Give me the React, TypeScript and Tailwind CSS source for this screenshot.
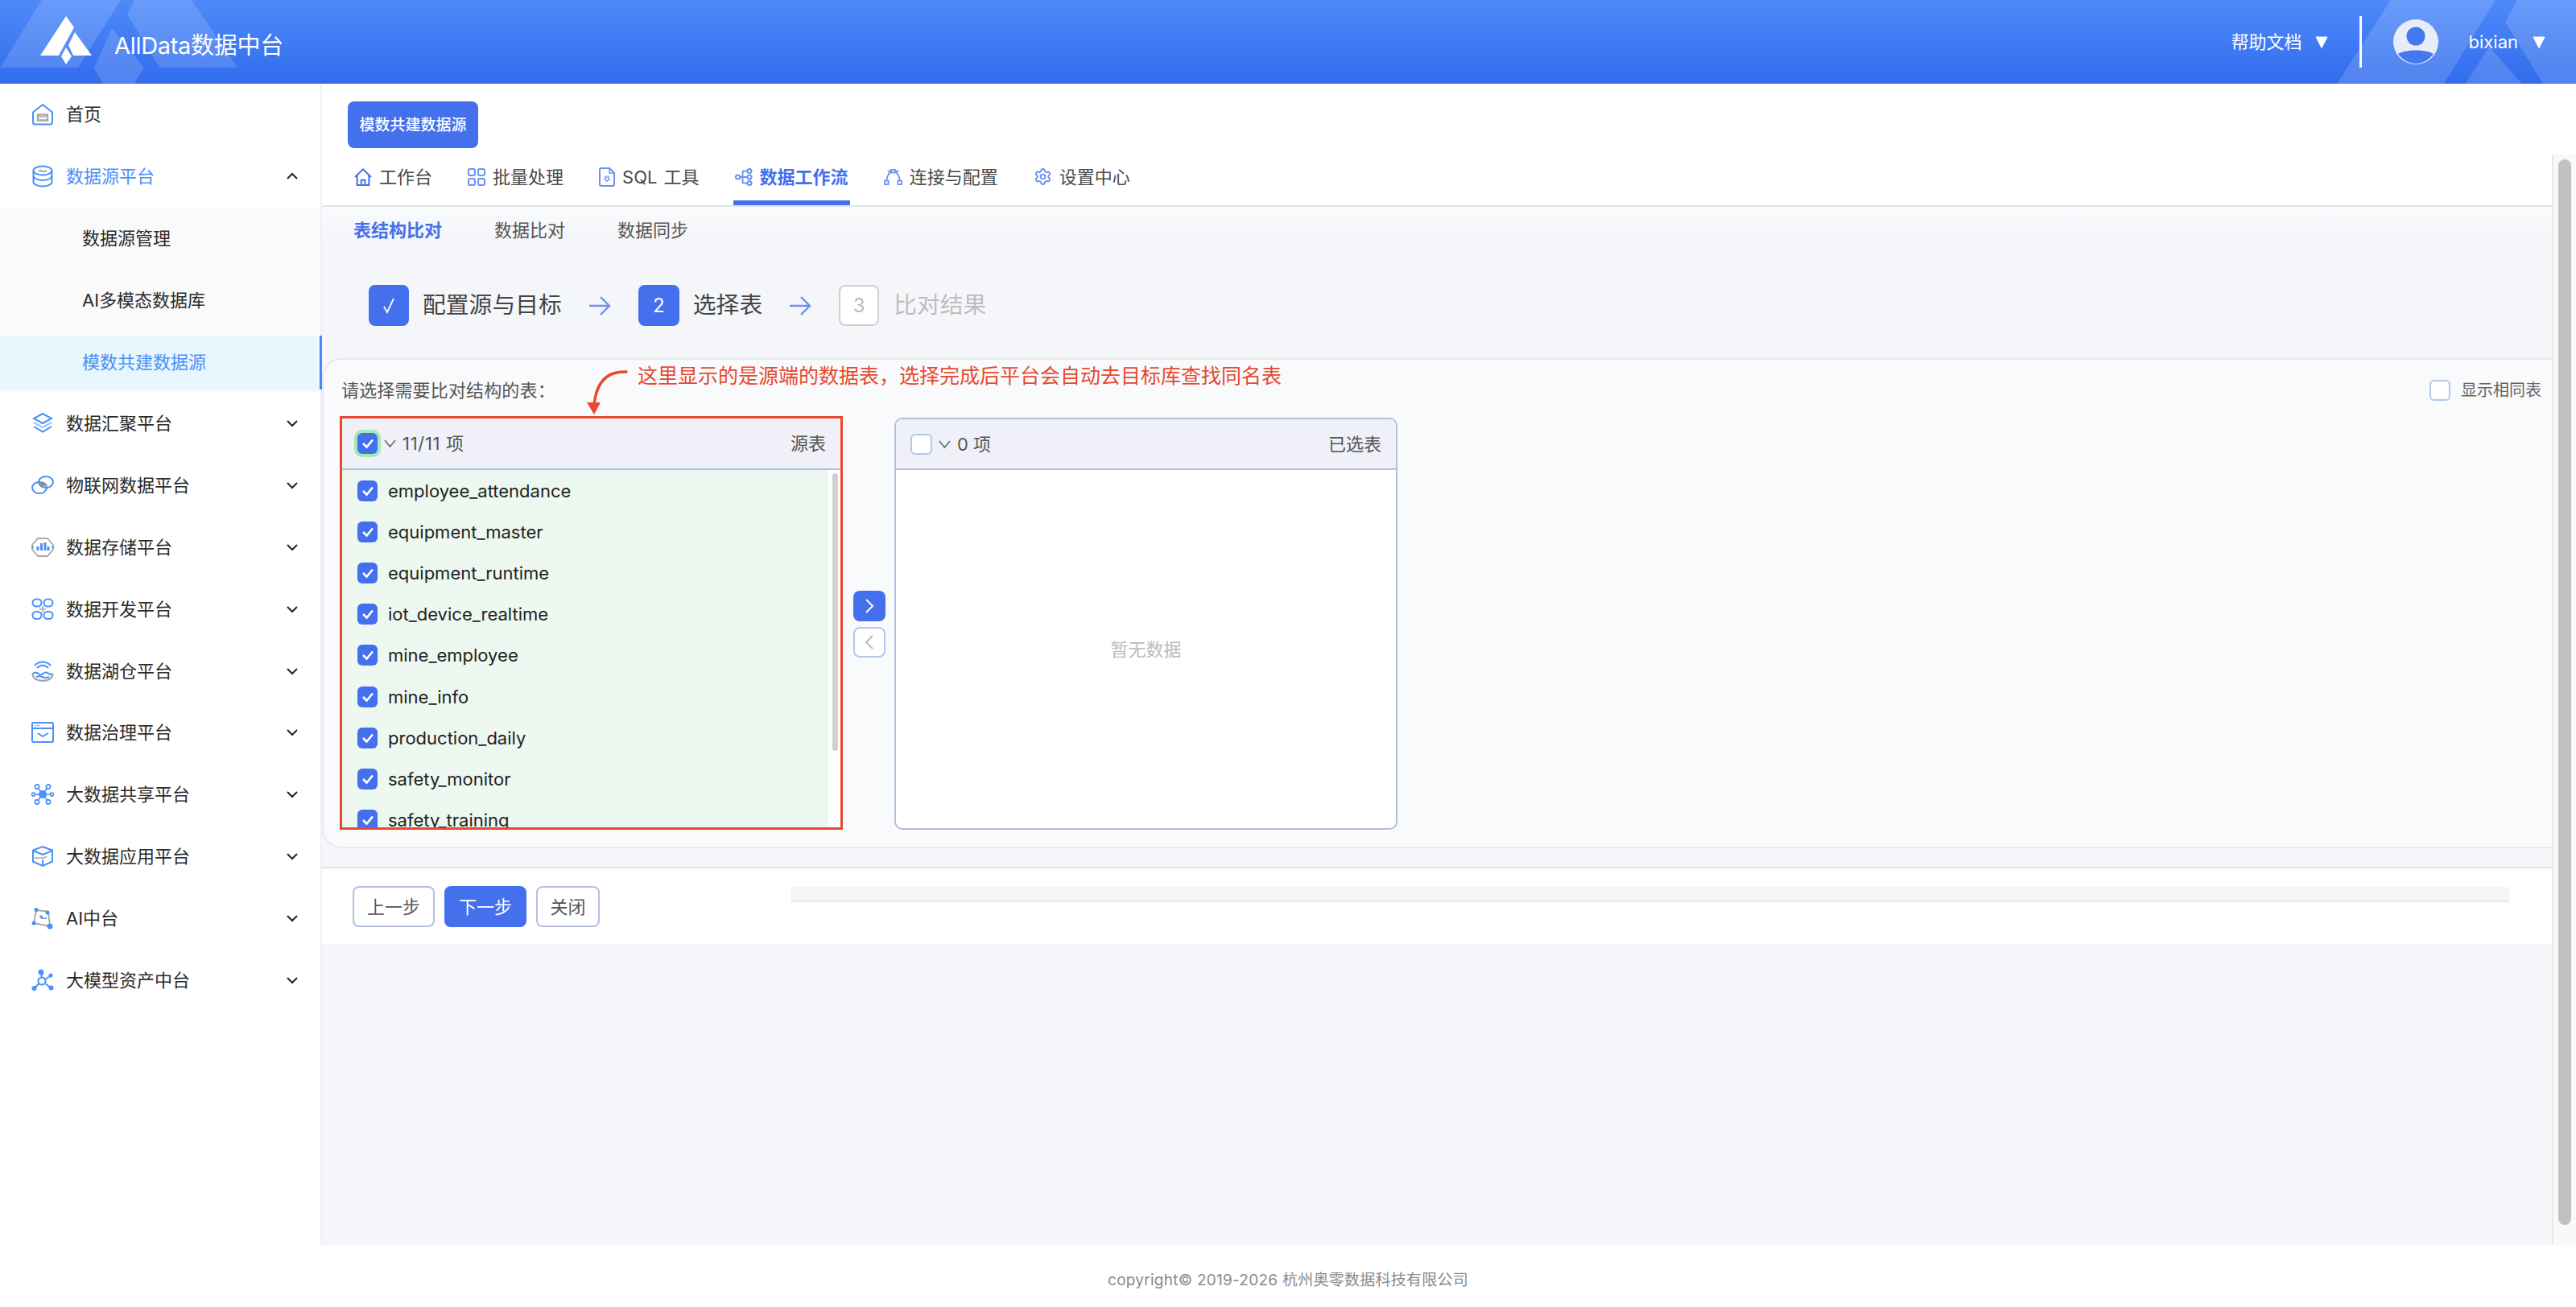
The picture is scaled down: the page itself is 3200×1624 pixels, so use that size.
import React from 'react'
import { Settings } from 'lucide-react'

const BLUE = '#4a90f7'
const GRAY = '#a9a9a9'

function NavIcon({ children }: { children: React.ReactNode }) {
  return (
    <svg width="28" height="28" viewBox="0 0 28 28" fill="none" stroke={BLUE} strokeWidth="2" className="shrink-0">
      {children}
    </svg>
  )
}

const navIcons: Record<string, React.ReactNode> = {
  home: (
    <>
      <path d="M2 11.5 14 2l12 9.5V24a2.5 2.5 0 0 1-2.5 2.5h-19A2.5 2.5 0 0 1 2 24z" />
      <path d="M8 14.5h12v7H8z" stroke={GRAY} strokeWidth="2.4" />
      <path d="M8 14.5l3 2.5h6l3-2.5" stroke={GRAY} strokeWidth="1.6" />
    </>
  ),
  db: (
    <>
      <ellipse cx="14" cy="7" rx="11.5" ry="5.5" />
      <path d="M2.5 7v6.5c0 3 5 5.5 11.5 5.5s11.5-2.500 11.500-5.500V7" />
      <path d="M2.500 14v7c0 3 5 5.500 11.500 5.500s11.500-2.500 11.500-5.500v-7" />
      <path d="M9 8c2-2.500 4-.5 5 0s3 .5 5-1.500" stroke={GRAY} />
    </>
  ),
  layers: (
    <>
      <path d="M14 2 25 8l-11 6L3 8z" />
      <path d="M3 13l11 6 11-6" stroke="#9fc4f8" strokeWidth="2.200" />
      <path d="M3 18l11 6.500L25 18" />
    </>
  ),
  iot: (
    <>
      <ellipse cx="10" cy="17" rx="9" ry="7" />
      <ellipse cx="18" cy="10" rx="9" ry="7" />
      <path d="M10.500 10.500c5-1.500 8 1 9 3-4 3.500-8 2.500-9.500 1-1-1.500-.5-3 .5-4z" fill="#8f8f8f" stroke="none" />
    </>
  ),
  store: (
    <>
      <path d="M8 3h12l7 8v6l-7 8H8l-7-8v-6z" stroke={GRAY} strokeWidth="1.800" />
      <path d="M8 18v-5M12.500 18V9M17 18V8M21 18v-5" strokeWidth="3" />
      <circle cx="1.500" cy="14" r="1.400" fill={BLUE} stroke="none" />
      <circle cx="26.500" cy="14" r="1.400" fill={BLUE} stroke="none" />
    </>
  ),
  dev: (
    <>
      <rect x="1.500" y="1.500" width="11" height="9" rx="4.500" />
      <rect x="15.500" y="1.500" width="11" height="9" rx="4.500" />
      <rect x="1.500" y="17" width="11" height="9" rx="4.500" />
      <rect x="15.500" y="17" width="11" height="9" rx="4.500" />
      <path d="M14 10v8M10 14h8" stroke={GRAY} strokeWidth="1.600" />
    </>
  ),
  lake: (
    <>
      <path d="M7 10c4-4.500 10-4.500 14 0" />
      <path d="M4 7c5.500-6 14.500-6 20 0" />
      <path d="M1.500 17c3-2 5-2 7 0s5 2 6 0 5-2 7 0 3 1 5 0" />
      <path d="M1.500 17c0 6 6 9 12.500 9s12.500-3 12.500-9" stroke={GRAY} strokeWidth="2.400" />
      <path d="M6 21c3-1 5-1 7 0s6 1 9 0" />
    </>
  ),
  gov: (
    <>
      <rect x="1" y="2" width="26" height="24" rx="1.500" />
      <path d="M1 9h26" />
      <path d="M4 5.500h7" stroke={GRAY} strokeDasharray="2 1" />
      <path d="M8 15l6 4 7-4" />
    </>
  ),
  share: (
    <>
      <circle cx="14" cy="14" r="5" fill={BLUE} stroke="none" />
      <circle cx="7" cy="4.500" r="2.600" strokeWidth="1.700" />
      <circle cx="21" cy="4.500" r="2.600" strokeWidth="1.700" />
      <circle cx="7" cy="23.500" r="2.600" strokeWidth="1.700" />
      <circle cx="21" cy="23.500" r="2.600" strokeWidth="1.700" />
      <circle cx="2.500" cy="14" r="2" strokeWidth="1.700" />
      <circle cx="25.500" cy="14" r="2" strokeWidth="1.700" />
      <path d="M8.500 7l3 3.500M19.500 7l-3 3.500M8.500 21l3-3.500M19.500 21l-3-3.500M4.500 14h5M18.500 14h5" strokeWidth="1.700" />
    </>
  ),
  cube: (
    <>
      <path d="M14 2 26 6.500v14L14 26 2 20.500v-14z" />
      <path d="M2 7l12 5 12-5" />
      <path d="M4 16h12l3-2" stroke={GRAY} strokeWidth="1.600" />
      <path d="M14 18v8" />
    </>
  ),
  ai: (
    <>
      <path d="M6 4l15 1.500L23 24 3 20z" stroke={GRAY} strokeWidth="1.800" />
      <circle cx="6" cy="3.500" r="2.500" fill={BLUE} stroke="none" />
      <circle cx="20" cy="7" r="2.500" fill={BLUE} stroke="none" />
      <circle cx="3" cy="20" r="2.500" fill={BLUE} stroke="none" />
      <circle cx="23" cy="24" r="3.500" fill={BLUE} stroke="none" />
      <circle cx="12" cy="12" r="1.800" fill={BLUE} stroke="none" />
      <path d="M12 14h7" strokeWidth="1.600" />
    </>
  ),
  model: (
    <>
      <circle cx="12" cy="4" r="3.500" fill={BLUE} stroke="none" />
      <circle cx="3.500" cy="24" r="3" fill={BLUE} stroke="none" />
      <circle cx="24.500" cy="23.500" r="3" fill={BLUE} stroke="none" />
      <circle cx="24" cy="8" r="2.500" fill={BLUE} stroke="none" />
      <circle cx="13" cy="15" r="4.500" />
      <path d="M12.500 6.500v4M17 13l6-4M9.500 18l-5 5M17 18l6 4.500" />
    </>
  ),
}

const navTail = [
  ['layers', '数据汇聚平台'],
  ['iot', '物联网数据平台'],
  ['store', '数据存储平台'],
  ['dev', '数据开发平台'],
  ['lake', '数据湖仓平台'],
  ['gov', '数据治理平台'],
  ['share', '大数据共享平台'],
  ['cube', '大数据应用平台'],
  ['ai', 'AI中台'],
  ['model', '大模型资产中台'],
]

const rows = [
  'employee_attendance',
  'equipment_master',
  'equipment_runtime',
  'iot_device_realtime',
  'mine_employee',
  'mine_info',
  'production_daily',
  'safety_monitor',
  'safety_training',
]

function Chevron({ up }: { up?: boolean }) {
  return (
    <svg width="16" height="10" viewBox="0 0 16 10" fill="none" stroke="#222" strokeWidth="2" className="ml-auto mr-[27px]">
      <path d={up ? 'M2 8l6-6 6 6' : 'M2 2l6 6 6-6'} />
    </svg>
  )
}

function Check({ ring }: { ring?: boolean }) {
  return (
    <span
      className={
        ring
          ? 'flex h-[26px] w-[25px] shrink-0 items-center justify-center rounded-[6px] bg-[#4470ee] ring-4 ring-[#a3e9b5]'
          : 'flex h-[26px] w-[25px] shrink-0 items-center justify-center rounded-[6px] bg-[#4470ee]'
      }
    >
      <svg width="16" height="14" viewBox="0 0 16 14" fill="none" stroke="#fff" strokeWidth="2.600">
        <path d="M2 7l4.500 4.500L14 2.500" />
      </svg>
    </span>
  )
}

function Caret() {
  return (
    <svg width="17" height="12" viewBox="0 0 17 12" fill="none" stroke="#666" strokeWidth="1.500" className="ml-[7px] mr-[7px]">
      <path d="M2 2l6.500 8L15 2" />
    </svg>
  )
}

function Triangle() {
  return (
    <svg width="16" height="15" viewBox="0 0 16 15" fill="#fff">
      <path d="M1 1h14L8 14.500z" stroke="#fff" strokeLinejoin="round" />
    </svg>
  )
}

function StepArrow() {
  return (
    <svg width="28" height="26" viewBox="0 0 28 26" fill="none" stroke="#6c91f5" strokeWidth="2.400">
      <path d="M1 13h25M15 2l11 11-11 11" />
    </svg>
  )
}

function Tab({ icon, text, active }: { icon: React.ReactNode; text: string; active?: boolean }) {
  return (
    <div
      className={
        active
          ? 'flex h-full items-center gap-[9px] border-b-[6px] border-[#4470ee] px-[2px] pb-[2px] font-semibold text-[#4470ee]'
          : 'flex h-full items-center gap-[9px] border-b-[6px] border-transparent px-[2px] pb-[2px] text-[#4a4a4a]'
      }
    >
      {icon}
      <span className="[word-spacing:2px]">{text}</span>
    </div>
  )
}

function Btn({ text, primary, w }: { text: string; primary?: boolean; w: string }) {
  return (
    <div
      className={
        primary
          ? `flex h-[51px] ${w} items-center justify-center rounded-[8px] bg-[#4470ee] text-white`
          : `flex h-[51px] ${w} items-center justify-center rounded-[8px] border-2 border-[#b4c0e2] bg-white text-[#555]`
      }
    >
      {text}
    </div>
  )
}

export default function App() {
  return (
    <div className="flex h-[1624px] w-[3200px] flex-col overflow-hidden bg-white text-[22px] leading-none [font-family:Inter,'Noto_Sans_CJK_SC',sans-serif]">
      {/* header */}
      <header className="relative flex h-[104px] shrink-0 items-center bg-gradient-to-b from-[#4e8afa] to-[#326cec] text-white">
        <svg className="absolute inset-0" width="3200" height="104" viewBox="0 0 3200 104" fill="#fff" fillOpacity="0.15">
          <path d="M0 84 52 0h98L97 84z" />
          <path d="M158 18 167 0h71l57 84h-97z" />
          <path d="M117 84 139 35l40 49-12 20h-39z" />
          <path d="M2903 104 2970 0h130l-64 104z" />
          <path d="M3127 0h73v104h-41l-47-77z" />
          <path d="M3063 104 3092 58l41 46z" />
        </svg>
        <svg className="relative ml-[50px]" width="64" height="64" viewBox="0 0 64 64" fill="#fff">
          <path d="M32 0 42 14 23 49H0z" />
          <path d="M43 20 64 49H41l-6-13z" />
          <path d="M32 39l7 11-7 10-6-10z" />
        </svg>
        <span className="relative ml-[28px] mt-[8px] text-[29px] tracking-[-0.3px]">AllData数据中台</span>
        <div className="relative ml-auto flex items-center">
          <span>帮助文档</span>
          <span className="ml-[16px]"><Triangle /></span>
          <span className="ml-[39px] h-[64px] w-[3px] bg-white" />
          <svg className="ml-[39px]" width="56" height="56" viewBox="0 0 56 56">
            <circle cx="28" cy="28" r="28" fill="#e8ecf9" />
            <circle cx="28" cy="21" r="11.500" fill="#4479ee" />
            <path d="M6 43c9-6 35-6 44 0-5 7-13 12-22 12S11 50 6 43z" fill="#4479ee" />
          </svg>
          <span className="ml-[38px]">bixian</span>
          <span className="ml-[18px] mr-[38px]"><Triangle /></span>
        </div>
      </header>

      <div className="flex min-h-0 flex-1">
        {/* sidebar */}
        <aside className="w-[400px] shrink-0 border-r-2 border-[#eef0f5] bg-white text-[#2b2b2b]">
          <div className="flex h-[76.8px] items-center gap-[15px] pl-[39px]">
            <NavIcon>{navIcons.home}</NavIcon>
            <span>首页</span>
          </div>
          <div className="flex h-[76.8px] items-center gap-[15px] pl-[39px] text-[#4a90f7]">
            <NavIcon>{navIcons.db}</NavIcon>
            <span>数据源平台</span>
            <Chevron up />
          </div>
          <div className="flex h-[230.4px] flex-col gap-[10px] bg-[#fafafa] pt-[5px]">
            <div className="flex h-[67px] items-center pl-[102px]">数据源管理</div>
            <div className="flex h-[67px] items-center pl-[102px]">AI多模态数据库</div>
            <div className="mr-[-2px] flex h-[67px] items-center border-r-[3px] border-[#4a86f5] bg-[#e8f6fe] pl-[102px] text-[#4a90f7]">模数共建数据源</div>
          </div>
          {navTail.map(([icon, label]) => (
            <div key={label} className="flex h-[76.8px] items-center gap-[15px] pl-[39px]">
              <NavIcon>{navIcons[icon]}</NavIcon>
              <span>{label}</span>
              <Chevron />
            </div>
          ))}
        </aside>

        <main className="flex min-w-0 flex-1 flex-col">
          <div className="h-[88px] shrink-0 pl-[32px] pt-[22px]">
            <div className="flex h-[58px] w-[162px] items-center justify-center rounded-[8px] bg-[#4470ee] text-[19px] font-medium text-white">模数共建数据源</div>
          </div>

          <div className="flex min-h-0 flex-1">
            <div className="flex min-w-0 flex-1 flex-col bg-[#f5f6fa]">
              {/* tabs */}
              <div className="flex h-[65px] shrink-0 gap-[40px] border-b-2 border-[#dfe3f2] bg-white pl-[38px]">
                <Tab
                  text="工作台"
                  icon={
                    <svg width="22" height="24" viewBox="0 0 24 24" fill="none" stroke="#4470ee" strokeWidth="2.200">
                      <path d="M1 12 12 1.500 23 12M4 10v13h16V10M9.500 23v-7h5v7" />
                    </svg>
                  }
                />
                <Tab
                  text="批量处理"
                  icon={
                    <svg width="22" height="22" viewBox="0 0 22 22" fill="none" stroke="#6c91f5" strokeWidth="2">
                      <rect x="1" y="1" width="8" height="8" rx="2" />
                      <rect x="13" y="1" width="8" height="8" rx="2" />
                      <rect x="1" y="13" width="8" height="8" rx="2" />
                      <rect x="13" y="13" width="8" height="8" rx="2" />
                    </svg>
                  }
                />
                <Tab
                  text="SQL 工具"
                  icon={
                    <svg width="20" height="24" viewBox="0 0 20 24" fill="none" stroke="#6c91f5" strokeWidth="2">
                      <path d="M1 3a2 2 0 0 1 2-2h10l6 6v14a2 2 0 0 1-2 2H3a2 2 0 0 1-2-2z" />
                      <path d="M13 1v6h6" strokeWidth="1.400" />
                      <circle cx="10" cy="14" r="2.500" strokeWidth="2.600" strokeDasharray="2 1" />
                    </svg>
                  }
                />
                <Tab
                  active
                  text="数据工作流"
                  icon={
                    <svg width="22" height="22" viewBox="0 0 22 22" fill="none" stroke="#6c91f5" strokeWidth="2">
                      <circle cx="3.500" cy="11" r="2.500" />
                      <circle cx="18" cy="3.500" r="2.500" />
                      <circle cx="18" cy="11" r="2.500" />
                      <circle cx="18" cy="18.500" r="2.500" />
                      <path d="M6 11h9.500M9.500 11V5c0-1 .5-1.500 1.500-1.500h4.500M9.500 11v6c0 1 .5 1.500 1.500 1.500h4.500" />
                    </svg>
                  }
                />
                <Tab
                  text="连接与配置"
                  icon={
                    <svg width="23" height="20" viewBox="0 0 25 22" fill="none" stroke="#6c91f5" strokeWidth="2">
                      <rect x="10" y="1" width="5" height="4" />
                      <rect x="1" y="16" width="5" height="5" />
                      <rect x="19" y="16" width="5" height="5" />
                      <path d="M10 3H5M15 3h5M3.500 16C4 10 6 6 10 3.500M21.500 16C21 10 19 6 15 3.500" />
                    </svg>
                  }
                />
                <Tab text="设置中心" icon={<Settings size={23} color="#6c91f5" strokeWidth={2} />} />
              </div>

              {/* sub tabs */}
              <div className="flex h-[57px] shrink-0 items-center gap-[65px] bg-gradient-to-b from-[#f9fafc] to-[#f3f4f7] pl-[39px] text-[#555]">
                <span className="font-semibold text-[#4470ee]">表结构比对</span>
                <span>数据比对</span>
                <span>数据同步</span>
              </div>

              {/* steps */}
              <div className="flex h-[131px] shrink-0 items-center pl-[58px] text-[28.8px] text-[#444]">
                <span className="flex h-[51px] w-[50px] items-center justify-center rounded-[8px] bg-[#4470ee]">
                  <svg width="18" height="24" viewBox="0 0 18 24" fill="none" stroke="#fff" strokeWidth="1.800">
                    <path d="M3 13l4 7L15 3" />
                  </svg>
                </span>
                <span className="ml-[17px]">配置源与目标</span>
                <span className="ml-[33px]"><StepArrow /></span>
                <span className="ml-[34px] flex h-[51px] w-[51px] items-center justify-center rounded-[8px] bg-[#4470ee] text-[24px] text-white">2</span>
                <span className="ml-[17px]">选择表</span>
                <span className="ml-[33px]"><StepArrow /></span>
                <span className="ml-[34px] flex h-[51px] w-[50px] items-center justify-center rounded-[8px] border-2 border-[#cfcfcf] bg-white text-[24px] text-[#bbb]">3</span>
                <span className="ml-[18px] text-[#bdbdbd]">比对结果</span>
              </div>

              {/* transfer panel */}
              <section className="relative h-[609px] shrink-0 rounded-l-[24px] border-y-2 border-l-2 border-[#e8e9ef] bg-[#f9fafc] pl-[20px]">
                <div className="flex h-[70px] items-center pl-[2px] pr-[13px] pt-[6px] text-[#555]">
                  <span className="tracking-[0.15px]">请选择需要比对结构的表：</span>
                  <span className="ml-auto h-[26px] w-[26px] rounded-[6px] border-2 border-[#b4c6ea] bg-white" />
                  <span className="ml-[13px] text-[20px] text-[#666]">显示相同表</span>
                </div>

                {/* note above the source list */}
                <div className="absolute left-[390px] top-[5px] whitespace-nowrap text-[25px] leading-[30px] text-[#e8492e]">这里显示的是源端的数据表，选择完成后平台会自动去目标库查找同名表</div>
                <svg className="absolute left-[326px] top-[8px]" width="54" height="60" viewBox="0 0 54 60" fill="none">
                  <path d="M50 7C28 6 13 18 10 48" stroke="#e8492e" strokeWidth="3.500" strokeLinecap="round" />
                  <path d="M1 45h17l-8 15z" fill="#e8492e" />
                </svg>

                <div className="flex items-start">
                  {/* source list */}
                  <div className="h-[514px] w-[625px] shrink-0 border-[3px] border-[#e8492e]">
                    <div className="flex h-[64px] items-center border-b-2 border-[#b4bedd] bg-[#eff0f8] pl-[19px] pr-[18px] text-[#555]">
                      <Check ring />
                      <Caret />
                      <span className="tracking-[0.7px]">11/11 项</span>
                      <span className="ml-auto">源表</span>
                    </div>
                    <div className="flex h-[444px] overflow-hidden bg-white">
                      <div className="w-[604px] bg-[#edf8f0]">
                        {rows.map((r) => (
                          <div key={r} className="flex h-[51.2px] items-center gap-[13px] pl-[19px] text-[#222]">
                            <Check />
                            <span>{r}</span>
                          </div>
                        ))}
                      </div>
                      <div className="ml-[5px] mt-[4px] h-[345px] w-[7px] rounded-full bg-[#d0d0d0]" />
                    </div>
                  </div>

                  {/* move buttons */}
                  <div className="ml-[13px] mt-[217px] flex w-[40px] shrink-0 flex-col gap-[7px]">
                    <span className="flex h-[38px] items-center justify-center rounded-[8px] bg-[#4470ee]">
                      <svg width="12" height="20" viewBox="0 0 12 20" fill="none" stroke="#fff" strokeWidth="2">
                        <path d="M2 2l8 8-8 8" />
                      </svg>
                    </span>
                    <span className="flex h-[38px] items-center justify-center rounded-[8px] border-2 border-[#b4c6ea] bg-white">
                      <svg width="12" height="20" viewBox="0 0 12 20" fill="none" stroke="#bbb" strokeWidth="2">
                        <path d="M10 2l-8 8 8 8" />
                      </svg>
                    </span>
                  </div>

                  {/* target list */}
                  <div className="ml-[11px] mt-[2px] flex h-[512px] w-[625px] shrink-0 flex-col overflow-hidden rounded-[10px] border-2 border-[#b4bedd] bg-white">
                    <div className="flex h-[63px] shrink-0 items-center border-b-2 border-[#b4bedd] bg-[#eff0f8] pl-[18px] pr-[18px] text-[#555]">
                      <span className="h-[26px] w-[27px] rounded-[6px] border-2 border-[#b4c6ea] bg-white" />
                      <Caret />
                      <span>0 项</span>
                      <span className="ml-auto">已选表</span>
                    </div>
                    <div className="flex flex-1 items-center justify-center text-[#bbb]">暂无数据</div>
                  </div>
                </div>
              </section>

              {/* wizard footer */}
              <div className="mt-[23px] flex h-[96px] shrink-0 items-start border-t-2 border-[#e4e4e4] bg-white pl-[38px] pt-[22px]">
                <div className="flex gap-[12px]">
                  <Btn text="上一步" w="w-[102px]" />
                  <Btn text="下一步" primary w="w-[102px]" />
                  <Btn text="关闭" w="w-[79px]" />
                </div>
                <div className="ml-[237px] mr-[53px] mt-[1px] h-[19px] flex-1 border-b-2 border-[#e8e8e8] bg-[#f5f5f5]" />
              </div>
            </div>

            {/* page scrollbar */}
            <div className="w-[30px] shrink-0 border-l-2 border-[#e8e8e8] bg-[#f9f9f9] pl-[6px] pt-[6px]">
              <div className="h-[1324px] w-[16px] rounded-full bg-[#c1c1c1]" />
            </div>
          </div>
        </main>
      </div>

      <footer className="flex h-[77px] shrink-0 items-center justify-center pt-[9px] text-[19px] tracking-[0.25px] text-[#8a8a8a]">
        copyright© 2019-2026 杭州奥零数据科技有限公司
      </footer>
    </div>
  )
}
